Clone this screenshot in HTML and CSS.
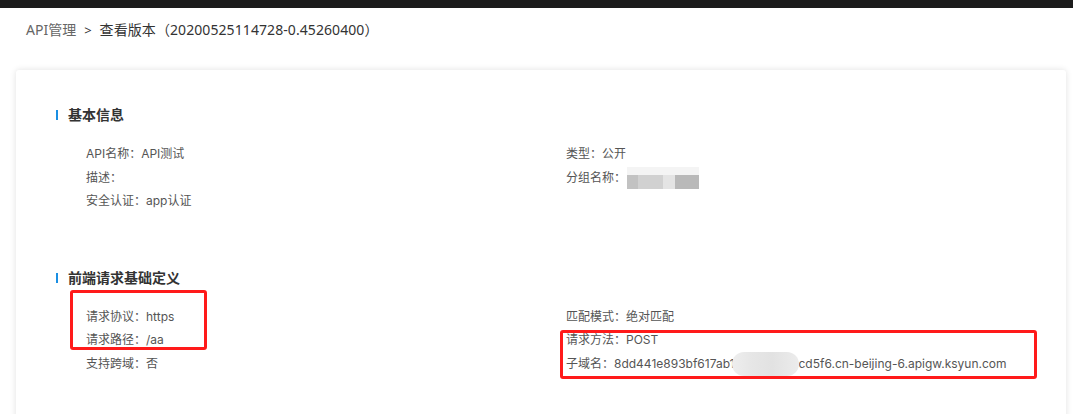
FILE: index.html
```html
<!DOCTYPE html>
<html lang="zh-CN">
<head>
<meta charset="utf-8">
<title>查看版本</title>
<link rel="stylesheet" href="styles.css">
</head>
<body>
<div class="topbar"></div>
<div class="breadcrumb">
  <span class="crumb-parent">API管理</span>
  <span class="crumb-sep">&gt;</span>
  <span class="crumb-current">查看版本（20200525114728-0.45260400）</span>
</div>
<div class="card">
  <section class="section section-basic">
    <h2 class="section-title">基本信息</h2>
    <div class="fields">
      <div class="col">
        <div class="field">API名称：API测试</div>
        <div class="field">描述：</div>
        <div class="field">安全认证：app认证</div>
      </div>
      <div class="col">
        <div class="field">类型：公开</div>
        <div class="field">分组名称：<span class="blur-group"><span class="b1"></span><span class="b2"></span><span class="b3"></span><span class="b4"></span></span></div>
      </div>
    </div>
  </section>
  <section class="section section-front">
    <h2 class="section-title">前端请求基础定义</h2>
    <div class="fields">
      <div class="col">
        <div class="field">请求协议：https</div>
        <div class="field">请求路径：/aa</div>
        <div class="field">支持跨域：否</div>
      </div>
      <div class="col">
        <div class="field">匹配模式：绝对匹配</div>
        <div class="field">请求方法：POST</div>
        <div class="field">子域名：8dd441e893bf617ab1<span class="blur-domain"></span>cd5f6.cn-beijing-6.apigw.ksyun.com</div>
      </div>
    </div>
    <div class="mark mark-left"></div>
    <div class="mark mark-right"></div>
  </section>
</div>
</body>
</html>
```

FILE: styles.css
```css
* { box-sizing: border-box; }
html, body { margin: 0; padding: 0; }
body {
  background: #ffffff;
  font-family: "Inter", "Noto Sans CJK SC", sans-serif;
  color: #333;
  overflow: hidden;
  height: 414px;
}
.topbar {
  height: 8px;
  background: #1c1c1c;
}
.breadcrumb {
  display: flex;
  align-items: center;
  gap: 7px;
  padding: 0 0 0 26px;
  height: 44px;
  font-family: "Noto Sans", "Noto Sans CJK SC", sans-serif;
  font-size: 14px;
  line-height: 20px;
}
.crumb-parent { color: #666; }
.crumb-sep { color: #333; font-size: 13px; margin: 0 1px; }
.crumb-current { color: #333; letter-spacing: 0.08px; }
.card {
  margin: 18px 7px 0 16px;
  background: #fff;
  border-radius: 3px;
  box-shadow: 0 0 6px rgba(0, 0, 0, 0.12);
  height: 400px;
  padding: 40px 40px 0 40px;
}
.section { position: relative; }
.section-title {
  margin: 0;
  font-size: 14px;
  font-weight: bold;
  line-height: 20px;
  color: #333;
  padding-left: 10px;
  border-left: 2px solid #1a8fe3;
  height: 10px;
  display: flex;
  align-items: center;
}
.fields {
  display: grid;
  grid-template-columns: 480px 1fr;
  padding-left: 30px;
  margin-top: 22px;
}
.field {
  font-size: 12px;
  line-height: 23.5px;
  color: #555;
  white-space: nowrap;
}
.section-front { margin-top: 60px; }
.section-front .fields { margin-top: 22px; }
.blur-group {
  display: inline-block;
  vertical-align: middle;
  width: 72px;
  height: 22px;
  margin-left: 1px;
  position: relative;
  background: linear-gradient(#f4f4f4, #f4f4f4) top / 100% 8px no-repeat;
}
.blur-group span {
  position: absolute;
  bottom: 0;
  height: 14px;
}
.blur-group .b1 { left: 0; width: 11px; background: #c2c2c2; }
.blur-group .b2 { left: 11px; width: 25px; background: #d1d1d1; }
.blur-group .b3 { left: 36px; width: 12px; background: #e4e4e4; }
.blur-group .b4 { left: 48px; width: 24px; background: #b9b9b9; }
.blur-domain {
  display: inline-block;
  vertical-align: middle;
  width: 67px;
  height: 24px;
  margin-left: -2px;
  margin-right: -1px;
  border-radius: 12px;
  background: linear-gradient(90deg, #eeeeee 0%, #e6e6e6 30%, #e2e2e2 60%, #ececec 100%);
  position: relative;
}
.mark {
  position: absolute;
  border: 3px solid #ff1a1a;
  border-radius: 3px;
}
.mark-left { left: 14px; top: 17px; width: 137px; height: 60px; }
.mark-right { left: 504px; top: 57px; width: 477px; height: 49px; }
```
